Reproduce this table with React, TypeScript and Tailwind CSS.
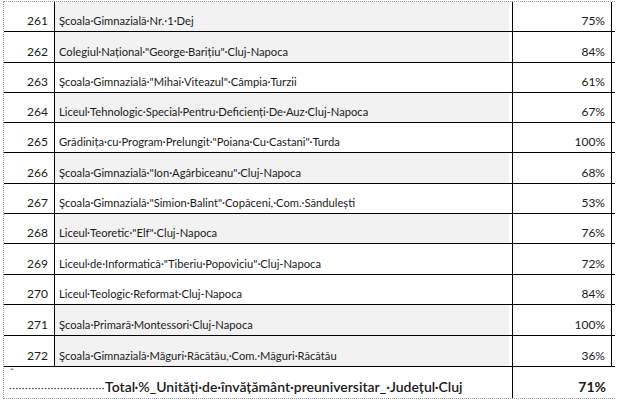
const rows = [
  { n: 261, name: "Şcoala·Gimnazială·Nr.·1·Dej", pct: "75%", shade: true, h: "h-[30px]" },
  { n: 262, name: "Colegiul·Național·\"George·Barițiu\"·Cluj-Napoca", pct: "84%", shade: true, h: "h-[31px]" },
  { n: 263, name: "Şcoala·Gimnazială·\"Mihai·Viteazul\"·Câmpia·Turzii", pct: "61%", shade: false, h: "h-[30px]" },
  { n: 264, name: "Liceul·Tehnologic·Special·Pentru·Deficienți·De·Auz·Cluj-Napoca", pct: "67%", shade: true, h: "h-[30px]" },
  { n: 265, name: "Grădinița·cu·Program·Prelungit·\"Poiana·Cu·Castani\"·Turda", pct: "100%", shade: false, h: "h-[30px]" },
  { n: 266, name: "Şcoala·Gimnazială·\"Ion·Agârbiceanu\"·Cluj-Napoca", pct: "68%", shade: true, h: "h-[31px]" },
  { n: 267, name: "Şcoala·Gimnazială·\"Simion·Balint\"·Copăceni,·Com.·Săndulești", pct: "53%", shade: false, h: "h-[30px]" },
  { n: 268, name: "Liceul·Teoretic·\"Elf\"·Cluj-Napoca", pct: "76%", shade: true, h: "h-[30px]" },
  { n: 269, name: "Liceul·de·Informatică·\"Tiberiu·Popoviciu\"·Cluj-Napoca", pct: "72%", shade: false, h: "h-[31px]" },
  { n: 270, name: "Liceul·Teologic·Reformat·Cluj-Napoca", pct: "84%", shade: false, h: "h-[30px]" },
  { n: 271, name: "Şcoala·Primară·Montessori·Cluj-Napoca", pct: "100%", shade: true, h: "h-[31px]" },
  { n: 272, name: "Şcoala·Gimnazială·Măguri·Răcătău,·Com.·Măguri·Răcătău", pct: "36%", shade: true, h: "h-[31px]" },
];

export default function App() {
  return (
    <div className="w-[617px] h-[402px] bg-white overflow-hidden font-['Lato',sans-serif] text-[11.2px] text-[#1a1a1a]">
      <div className="ml-[3px] mt-[1px] w-[612px] border-l border-t border-dotted border-[#8a9bb0]">
        {rows.map((r) => (
          <div key={r.n} className={`flex border-b border-black ${r.h}`}>
            <div className="w-[50px] flex items-end justify-end pr-[6px] pb-[3px] leading-[14px] text-[12px]">{r.n}</div>
            <div className="w-[458px] flex border-l border-black">
              <div className={`flex-1 mr-[3px] flex items-end pl-[4px] pb-[3px] leading-[14px] whitespace-nowrap ${r.shade ? "bg-[#f2f2f2]" : ""}`}>
                {r.name}
              </div>
            </div>
            <div className="w-[100px] flex items-end justify-end pr-[6px] pb-[3px] leading-[14px] text-[12px] border-l border-r border-black">
              {r.pct}
            </div>
          </div>
        ))}
        <div className="flex h-[32px] border-b border-dotted border-[#8a9bb0]">
          <div className="w-[508px] relative flex items-end pl-[5px] pb-[3px] leading-[16px] text-[14px] font-semibold whitespace-nowrap">
            <span className="absolute left-[6px] top-[1px] text-[9px] leading-[9px] text-[#555]">ˆ</span>
            <span className="font-normal text-[10px] tracking-[0.6px] text-[#333]">······························</span>
            <span>Total·%_Unități·de·învățământ·preuniversitar_·Județul·Cluj</span>
          </div>
          <div className="w-[100px] flex items-end justify-end pr-[6px] pb-[3px] leading-[16px] text-[14px] font-bold border-l border-black">
            71%
          </div>
        </div>
      </div>
    </div>
  );
}
